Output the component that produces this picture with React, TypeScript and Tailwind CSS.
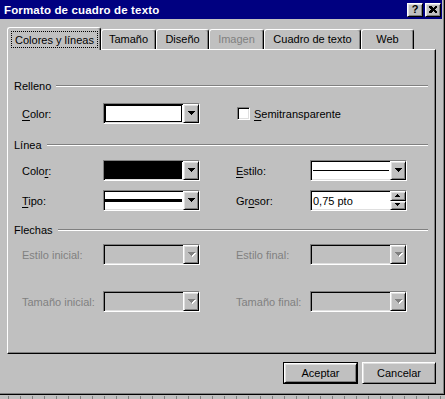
import React from 'react';

// win98 bevels
const raised =
  'border border-t-white border-l-white border-r-black border-b-black shadow-[inset_1px_1px_0_#dfdfdf,inset_-1px_-1px_0_#808080]';
const sunken =
  'border border-t-[#808080] border-l-[#808080] border-r-white border-b-white shadow-[inset_1px_1px_0_#000,inset_-1px_-1px_0_#dfdfdf]';

const Arrow = ({disabled = false, small = false, up = false}: {disabled?: boolean; small?: boolean; up?: boolean}) => {
  const rows = small ? [5, 3, 1] : [7, 5, 3, 1];
  const w = rows[0];
  const ordered = up ? [...rows].reverse() : rows;
  const draw = (fill: string, dx: number, dy: number) =>
    ordered.map((len, i) => (
      <rect key={fill + i} x={(w - len) / 2 + dx} y={i + dy} width={len} height={1} fill={fill} />
    ));
  return (
    <svg width={w + 1} height={rows.length + 1} shapeRendering="crispEdges">
      {disabled && draw('#ffffff', 1, 1)}
      {draw(disabled ? '#808080' : '#000000', 0, 0)}
    </svg>
  );
};

const Combo = ({children, disabled = false}: {children?: React.ReactNode; disabled?: boolean}) => (
  <div className={`flex h-[21px] w-[97px] ${sunken} ${disabled ? 'bg-[#c0c0c0]' : 'bg-white'}`}>
    <div className="flex flex-1 items-stretch p-[1px]">{children}</div>
    <div className={`flex w-[16px] items-center justify-center bg-[#c0c0c0] pl-[1px] ${raised}`}>
      <Arrow disabled={disabled} />
    </div>
  </div>
);

const U = ({children}: {children: React.ReactNode}) => <span className="underline underline-offset-2">{children}</span>;

const Header = ({title}: {title: string}) => (
  <div className="flex h-[14px] items-center gap-[5px]">
    <span>{title}</span>
    <div className="h-[2px] flex-1 border-t border-b border-t-[#808080] border-b-white" />
  </div>
);

const Row = ({
  left,
  leftLabel,
  right,
  rightLabel,
  disabled = false,
}: {
  left: React.ReactNode;
  leftLabel: React.ReactNode;
  right?: React.ReactNode;
  rightLabel?: React.ReactNode;
  disabled?: boolean;
}) => (
  <div className={`flex h-[21px] items-center pl-[8px] ${disabled ? 'text-[#808080]' : ''}`}>
    <div className="w-[81px]">{leftLabel}</div>
    {left}
    <div className="ml-[36px] w-[74px]">{rightLabel}</div>
    {right}
  </div>
);

const Button = ({label, isDefault = false}: {label: string; isDefault?: boolean}) => (
  <div className={`h-[22px] ${isDefault ? 'border border-black' : ''}`}>
    <div className={`flex h-full items-center justify-center bg-[#c0c0c0] ${raised} ${isDefault ? 'w-[73px]' : 'w-[74px]'}`}>
      {label}
    </div>
  </div>
);

const tabs = [
  {label: 'Tamaño', w: 'w-[55px]'},
  {label: 'Diseño', w: 'w-[53px]'},
  {label: 'Imagen', w: 'w-[55px]', disabled: true},
  {label: 'Cuadro de texto', w: 'w-[97px]'},
  {label: 'Web', w: 'w-[53px]'},
];

export default function App() {
  return (
    <div className="flex h-[399px] w-[445px] flex-col overflow-hidden bg-[#c0c0c0] font-['Liberation_Sans',Arial,sans-serif] text-[11px] leading-[14px] text-black">
      {/* window */}
      <div className="h-[395px] border-r border-b border-black">
        <div className="flex h-full flex-col border-r border-b border-[#808080] pr-[1px]">
          {/* title bar */}
          <div className="flex h-[19px] items-center bg-[#000080] pl-[4px] pr-[1px] text-white">
            <span className="flex-1 text-[11.5px] font-bold tracking-[0.15px]">Formato de cuadro de texto</span>
            <div className={`flex h-[14px] w-[16px] items-center justify-center bg-[#c0c0c0] text-[11px] leading-none font-bold text-black ${raised}`}>
              ?
            </div>
            <div className={`ml-[2px] flex h-[14px] w-[16px] items-center justify-center bg-[#c0c0c0] ${raised}`}>
              <svg width="8" height="7" shapeRendering="crispEdges">
                <path d="M0 0h2l2 2 2-2h2v1L6 3.5 8 6v1H6L4 5 2 7H0V6l2-2.5L0 1z" fill="#000" />
              </svg>
            </div>
          </div>

          {/* tabs */}
          <div className="flex items-end pt-[8px] pl-[7px]">
            <div className="relative z-10 -mb-px h-[23px] w-[94px] rounded-t-[3px] border-t border-l border-r border-t-white border-l-white border-r-black bg-[#c0c0c0] pt-[3px] pl-[3px] shadow-[inset_-1px_0_0_#808080]">
              <div className="flex h-[17px] w-[87px] items-center justify-center border border-dotted border-black">
                Colores y líneas
              </div>
            </div>
            {tabs.map((t) => (
              <div
                key={t.label}
                className={`flex h-[20px] ${t.w} items-center justify-center rounded-t-[3px] border-t border-l border-r border-t-white border-l-white border-r-black pb-[1px] shadow-[inset_-1px_0_0_#808080] ${t.disabled ? 'text-[#808080]' : ''}`}
              >
                {t.label}
              </div>
            ))}
          </div>

          {/* panel */}
          <div className="ml-[7px] h-[305px] w-[429px] border border-t-white border-l-white border-r-black border-b-black pt-[29px] pr-[7px] pl-[6px] shadow-[inset_-1px_-1px_0_#808080]">
            <Header title="Relleno" />
            <div className="mt-[10px]">
              <Row
                leftLabel={<><U>C</U>olor:</>}
                left={
                  <Combo>
                    <div className="flex-1 border border-black bg-white" />
                  </Combo>
                }
                rightLabel={
                  <div className="flex items-center gap-[4px] pl-[1px]">
                    <div className={`h-[13px] w-[13px] shrink-0 bg-white ${sunken}`} />
                    <span className="whitespace-nowrap">
                      <U>S</U>emitransparente
                    </span>
                  </div>
                }
              />
            </div>

            <div className="mt-[14px]">
              <Header title="Línea" />
            </div>
            <div className="mt-[8px]">
              <Row
                leftLabel={<>Colo<U>r</U>:</>}
                left={
                  <Combo>
                    <div className="flex-1 border border-black bg-black" />
                  </Combo>
                }
                rightLabel={<><U>E</U>stilo:</>}
                right={
                  <Combo>
                    <div className="flex flex-1 items-center pl-[1px]">
                      <div className="h-px w-full bg-black" />
                    </div>
                  </Combo>
                }
              />
            </div>
            <div className="mt-[9px]">
              <Row
                leftLabel={<><U>T</U>ipo:</>}
                left={
                  <Combo>
                    <div className="flex flex-1 items-center">
                      <div className="h-[3px] w-full bg-black" />
                    </div>
                  </Combo>
                }
                rightLabel={<>Gr<U>o</U>sor:</>}
                right={
                  <div className={`flex h-[21px] w-[97px] bg-white ${sunken}`}>
                    <div className="flex flex-1 items-center pl-[2px]">0,75 pto</div>
                    <div className="flex w-[16px] flex-col">
                      <div className={`flex flex-1 items-center justify-center bg-[#c0c0c0] ${raised}`}>
                        <Arrow small up />
                      </div>
                      <div className={`flex flex-1 items-center justify-center bg-[#c0c0c0] ${raised}`}>
                        <Arrow small />
                      </div>
                    </div>
                  </div>
                }
              />
            </div>

            <div className="mt-[12px]">
              <Header title="Flechas" />
            </div>
            <div className="mt-[7px]">
              <Row disabled leftLabel="Estilo inicial:" left={<Combo disabled />} rightLabel="Estilo final:" right={<Combo disabled />} />
            </div>
            <div className="mt-[26px]">
              <Row disabled leftLabel="Tamaño inicial:" left={<Combo disabled />} rightLabel="Tamaño final:" right={<Combo disabled />} />
            </div>
          </div>

          {/* buttons */}
          <div className="mt-[8px] flex w-[436px] justify-end gap-[4px]">
            <Button label="Aceptar" isDefault />
            <Button label="Cancelar" />
          </div>
        </div>
      </div>

      {/* ruler strip of the document behind */}
      <div className="flex flex-1 items-start gap-[11px] pt-[1px] pl-[8px]">
        {Array.from({length: 37}).map((_, i) => (
          <div key={i} className="h-[3px] w-px shrink-0 bg-[#808080]" />
        ))}
      </div>
    </div>
  );
}
